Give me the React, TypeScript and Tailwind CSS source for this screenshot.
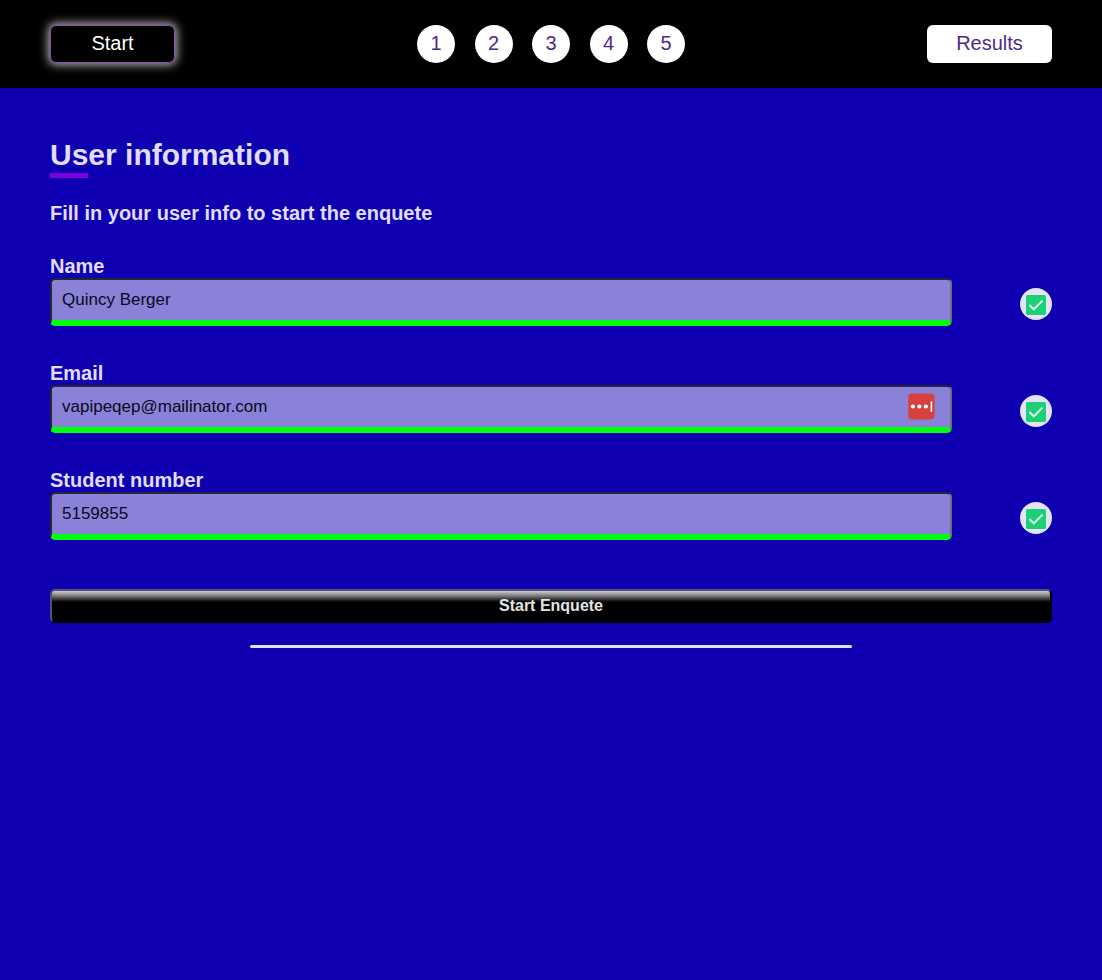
import { useState } from "react";

const steps = [1, 2, 3, 4, 5];

function ValidMark() {
  return (
    <span className="mt-1 flex size-8 shrink-0 items-center justify-center rounded-full bg-[#e3e3fb]">
      <svg viewBox="0 0 32 32" className="size-8" role="img" aria-label="Valid">
        <rect x="6" y="7" width="20" height="20" rx="1.8" fill="#1bd075" />
        <path d="M9.4 17l4.4 4.4 8.6-8.8" fill="none" stroke="#e6fbf2" strokeWidth="2" />
      </svg>
    </span>
  );
}

function PasswordManagerBadge() {
  return (
    <svg
      viewBox="0 0 27 27"
      className="pointer-events-none absolute top-[8px] right-[17px] size-[27px]"
      aria-hidden="true"
    >
      <rect x="0.2" y="0.5" width="26.4" height="26" rx="4" fill="#d6413d" />
      <circle cx="4.9" cy="13.5" r="2.1" fill="#fff" />
      <circle cx="11.4" cy="13.5" r="2.1" fill="#fff" />
      <circle cx="17.9" cy="13.5" r="2.1" fill="#fff" />
      <rect x="22.6" y="8.4" width="1.6" height="10.4" fill="#fff" />
    </svg>
  );
}

type FieldProps = {
  id: string;
  label: string;
  type: string;
  initial: string;
  badge?: boolean;
};

function Field({ id, label, type, initial, badge = false }: FieldProps) {
  const [value, setValue] = useState(initial);
  return (
    <div>
      <label htmlFor={id} className="block text-[20px] leading-[23px] font-bold">
        {label}
      </label>
      <div className="flex items-center justify-between">
        <div className="relative w-[90%]">
          <input
            id={id}
            type={type}
            value={value}
            onChange={(e) => setValue(e.target.value)}
            className="block h-12 w-full rounded-[5px] border-2 border-b-[6px] border-t-[#262437] border-r-[#6f6d7c] border-b-[#00ff0d] border-l-[#262437] bg-[#8a82d8] px-[10px] text-[17px] text-[#0b0820] outline-none"
          />
          {badge && <PasswordManagerBadge />}
        </div>
        <ValidMark />
      </div>
    </div>
  );
}

export default function App() {
  return (
    <div className="min-h-screen bg-[#0e00b0] font-['Liberation_Sans',Arial,sans-serif] text-[#e0ddff]">
      <header className="bg-black px-[50px] py-[25px]">
        <nav className="flex items-center justify-between text-[20px] leading-[36px]">
          <a
            href="#start"
            aria-current="page"
            className="h-[38px] w-[125px] rounded-[6px] border border-[#8a4bb8] bg-black text-center leading-[35px] text-white shadow-[0_0_10px_2px_rgba(255,255,255,0.7)]"
          >
            Start
          </a>
          <div className="flex w-[268px] justify-between">
            {steps.map((n) => (
              <a
                key={n}
                href={`#question-${n}`}
                className="size-[38px] rounded-full bg-white text-center text-[#4f2a85]"
              >
                {n}
              </a>
            ))}
          </div>
          <a
            href="#results"
            className="h-[38px] w-[125px] rounded-[6px] bg-white text-center text-[#4f2a85]"
          >
            Results
          </a>
        </nav>
      </header>

      <main className="px-[50px] pt-[49px]">
        <h1 className="text-[30px] leading-[36px] font-bold">User information</h1>
        <div className="h-[5px] w-[38px] bg-[#7b00e0]" />
        <h2 className="mt-6 text-[20px] leading-[23px] font-bold">
          Fill in your user info to start the enquete
        </h2>

        <form className="mt-[30px]" onSubmit={(e) => e.preventDefault()}>
          <div className="flex flex-col gap-9">
            <Field id="name" label="Name" type="text" initial="Quincy Berger" />
            <Field id="email" label="Email" type="email" initial="vapipeqep@mailinator.com" badge />
            <Field id="student-number" label="Student number" type="text" initial="5159855" />
          </div>
          <button
            type="submit"
            className="mt-[49px] block h-[34px] w-full rounded-[5px] border-2 border-t-[#56506f] border-r-black border-b-black border-l-[#56506f] bg-black bg-[linear-gradient(to_bottom,#d0cdd6_0px,#8a8a8a_4px,#3c3c3c_8px,#000000_11px)] text-[16px] leading-[28px] font-bold text-[#e3e3e3]"
          >
            Start Enquete
          </button>
        </form>
        <hr className="mx-auto mt-[22px] h-[3px] w-[60%] rounded-[2px] border-0 bg-[#e0ddff]" />
      </main>
    </div>
  );
}
